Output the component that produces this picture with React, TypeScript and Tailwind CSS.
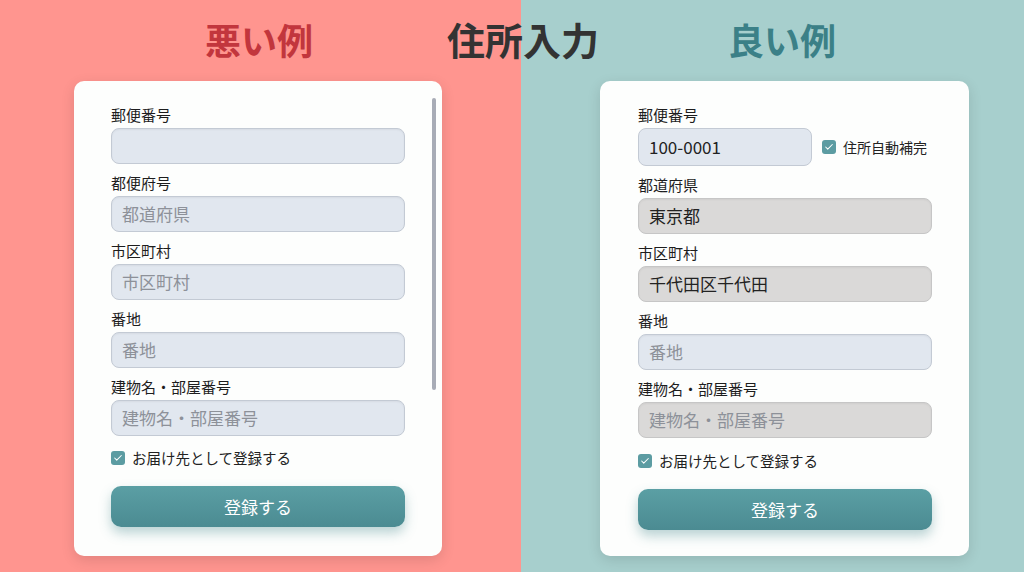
import { Check } from 'lucide-react'

const font = { fontFamily: '"Noto Sans CJK JP", "Noto Sans", sans-serif' }

function Box() {
  return (
    <span className="w-[14px] h-[14px] rounded-[3px] bg-[#5c9ca2] flex items-center justify-center flex-shrink-0">
      <Check className="w-[10px] h-[10px] text-white" strokeWidth={2.5} />
    </span>
  )
}

interface FieldProps {
  label: string
  value?: string
  placeholder?: string
  filled?: boolean
  tall?: boolean
}

function Field({ label, value, placeholder, filled, tall }: FieldProps) {
  const tone = filled
    ? 'bg-[#dad9d8] border-[#c6c6c6]'
    : 'bg-[#e1e7ef] border-[#c3cad4]'
  return (
    <div className="flex flex-col">
      <div className="h-[22px] leading-[22px] text-[15px] text-[#1d1d1d]">{label}</div>
      <div
        className={`mt-[2px] ${tall ? 'h-[38px]' : 'h-[36px]'} rounded-[8px] border ${tone} shadow-[inset_0_1px_2px_rgba(0,0,0,0.05)] flex items-center px-[10px] text-[17px] ${value ? 'text-[#222]' : 'text-[#8d9199]'}`}
      >
        {value ?? placeholder}
      </div>
    </div>
  )
}

function Submit() {
  return (
    <button className="h-[41px] rounded-[10px] bg-gradient-to-b from-[#5b9fa4] to-[#4b8b92] text-white text-[17px] shadow-[0_6px_12px_rgba(60,130,135,0.35)]">
      登録する
    </button>
  )
}

export default function App() {
  return (
    <div
      className="w-[1024px] h-[572px] overflow-hidden bg-[linear-gradient(to_right,#ff958f_521px,#a7cfcd_521px)]"
      style={font}
    >
      {/* Titles */}
      <div className="h-[81px] flex items-center font-bold leading-none pb-[4px]">
        <span className="ml-[205px] text-[36px] text-[#c2363d]">悪い例</span>
        <span className="ml-[134px] text-[38px] text-[#333333]">住所入力</span>
        <span className="ml-[129px] text-[36px] text-[#3b8087]">良い例</span>
      </div>

      <div className="flex">
        {/* Bad example */}
        <div className="relative ml-[74px] w-[368px] h-[475px] bg-[#fdfefd] rounded-[10px] shadow-[0_4px_14px_rgba(0,0,0,0.12)] pl-[37px] pr-[37px] pt-[23px]">
          <div className="absolute right-[6px] top-[17px] w-[4px] h-[292px] rounded-full bg-[#a8acb6]" />
          <div className="flex flex-col gap-[8px]">
            <Field label="郵便番号" placeholder="" />
            <Field label="都便府号" placeholder="都道府県" />
            <Field label="市区町村" placeholder="市区町村" />
            <Field label="番地" placeholder="番地" />
            <Field label="建物名・部屋番号" placeholder="建物名・部屋番号" />
          </div>
          <div className="mt-[13px] h-[18px] flex items-center gap-[7px] text-[14.5px] text-[#222]">
            <Box />
            お届け先として登録する
          </div>
          <div className="mt-[19px] flex flex-col">
            <Submit />
          </div>
        </div>

        {/* Good example */}
        <div className="ml-[158px] w-[369px] h-[475px] bg-[#fdfefd] rounded-[10px] shadow-[0_4px_14px_rgba(0,0,0,0.12)] pl-[38px] pr-[37px] pt-[23px]">
          <div className="flex flex-col gap-[8px]">
            <div className="flex flex-col">
              <div className="h-[22px] leading-[22px] text-[15px] text-[#1d1d1d]">郵便番号</div>
              <div className="mt-[2px] flex items-center">
                <div className="w-[174px] h-[38px] rounded-[8px] border bg-[#e1e7ef] border-[#c3cad4] flex items-center px-[10px] text-[17px] text-[#222]">
                  100-0001
                </div>
                <div className="ml-[10px] flex items-center gap-[7px] text-[14px] text-[#222]">
                  <Box />
                  住所自動補完
                </div>
              </div>
            </div>
            <Field label="都道府県" value="東京都" filled />
            <Field label="市区町村" value="千代田区千代田" filled />
            <Field label="番地" placeholder="番地" />
            <Field label="建物名・部屋番号" placeholder="建物名・部屋番号" filled />
          </div>
          <div className="mt-[14px] h-[18px] flex items-center gap-[7px] text-[14.5px] text-[#222]">
            <Box />
            お届け先として登録する
          </div>
          <div className="mt-[19px] flex flex-col">
            <Submit />
          </div>
        </div>
      </div>
    </div>
  )
}
